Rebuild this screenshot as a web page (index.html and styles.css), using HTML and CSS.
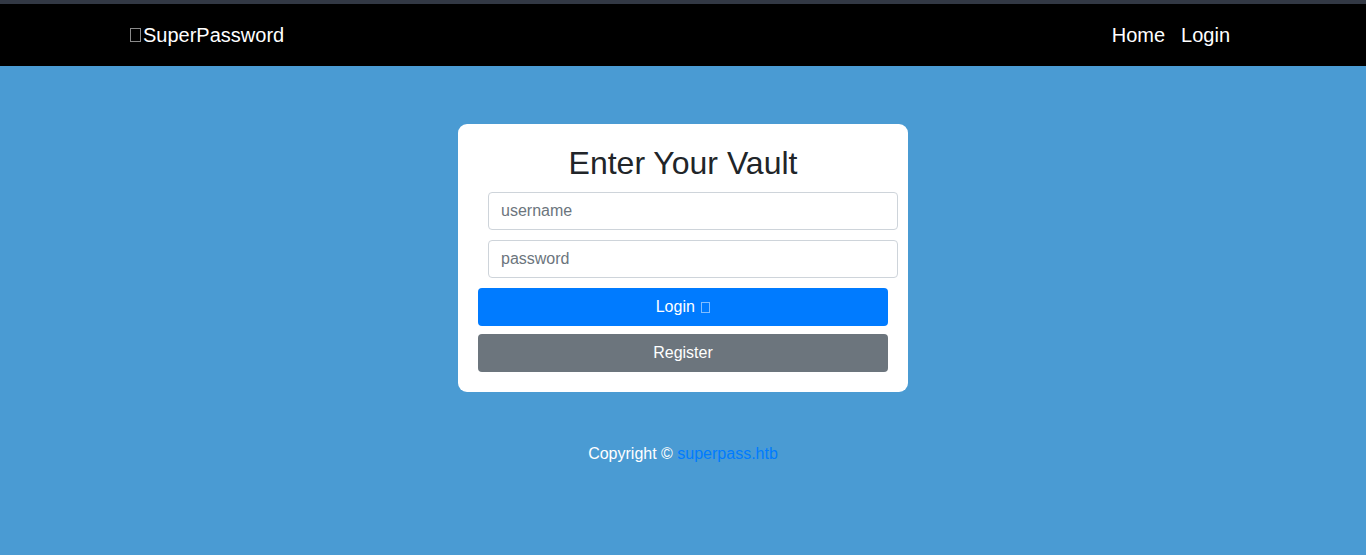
FILE: index.html
```html
<!DOCTYPE html>
<html lang="en">
<head>
    <meta charset="UTF-8">
    <meta name="viewport" content="width=device-width, initial-scale=1.0">
    <title>SuperPassword</title>
    <link rel="stylesheet" href="styles.css">
</head>
<body>
    <div class="top-strip"></div>
    <nav class="navbar">
        <div class="nav-inner">
            <a class="brand" href="/"><span class="tofu tofu-brand"></span>SuperPassword</a>
            <div class="nav-links">
                <a href="/">Home</a>
                <a href="/account/login">Login</a>
            </div>
        </div>
    </nav>

    <main class="page">
        <form class="vault-card">
            <h1>Enter Your Vault</h1>
            <input type="text" class="form-control" placeholder="username">
            <input type="password" class="form-control" placeholder="password">
            <button type="submit" class="btn btn-primary">Login <span class="tofu tofu-btn"></span></button>
            <button type="button" class="btn btn-secondary">Register</button>
        </form>

        <footer class="footer">
            Copyright &copy; <a href="/">superpass.htb</a>
        </footer>
    </main>
</body>
</html>
```

FILE: styles.css
```css
:root {
    --page-bg: #4a9bd3;
    --primary: #007bff;
    --secondary: #6c757d;
    --dark: #212529;
}

body {
    margin: 0;
    font-family: "Liberation Sans", Arial, sans-serif;
    background: var(--page-bg);
    color: var(--dark);
    min-height: 100vh;
}

.top-strip {
    height: 4px;
    background: #323844;
}

.navbar {
    background: #000;
    height: 62px;
    display: flex;
    align-items: center;
}

.nav-inner {
    width: 1140px;
    box-sizing: border-box;
    margin: 0 auto;
    padding: 0 23px 0 17px;
    display: flex;
    justify-content: space-between;
    align-items: center;
}

.navbar a {
    color: #fff;
    text-decoration: none;
    font-size: 20px;
}

.brand {
    display: flex;
    align-items: center;
}

.nav-links {
    display: flex;
    gap: 16px;
}

.tofu {
    display: inline-block;
    box-sizing: border-box;
    border: 1px solid rgba(255, 255, 255, 0.55);
}

.tofu-brand {
    width: 11px;
    height: 14px;
    margin-right: 2px;
    border-color: #8a8a8a;
}

.tofu-btn {
    width: 9px;
    height: 11px;
    margin-left: 2px;
    vertical-align: -1px;
    border-color: rgba(255, 255, 255, 0.5);
}

.page {
    display: flex;
    flex-direction: column;
    align-items: center;
    padding-top: 58px;
}

.vault-card {
    width: 450px;
    box-sizing: border-box;
    background: #fff;
    border-radius: 9px;
    padding: 20px 20px 20px;
    display: flex;
    flex-direction: column;
}

.vault-card h1 {
    margin: 0 0 10px;
    text-align: center;
    font-size: 32px;
    font-weight: 400;
    line-height: 1.2;
}

.form-control {
    box-sizing: border-box;
    width: 100%;
    height: 38px;
    margin: 0 0 10px 10px;
    padding: 6px 12px;
    border: 1px solid #ced4da;
    border-radius: 4px;
    font-family: inherit;
    font-size: 16px;
    color: #495057;
}

.form-control::placeholder {
    color: #6c757d;
}

.btn {
    height: 38px;
    border: none;
    border-radius: 4px;
    color: #fff;
    font-family: inherit;
    font-size: 16px;
    cursor: pointer;
}

.btn-primary {
    background: var(--primary);
    margin-bottom: 8px;
}

.btn-secondary {
    background: var(--secondary);
}

.footer {
    margin-top: 50px;
    color: #fff;
    font-size: 16px;
    line-height: 24px;
}

.footer a {
    color: var(--primary);
    text-decoration: none;
}
```
